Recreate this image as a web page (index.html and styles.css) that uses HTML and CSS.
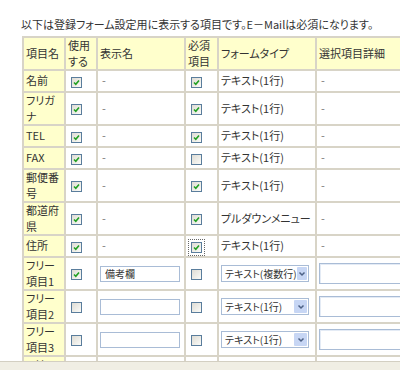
FILE: index.html
```html
<!DOCTYPE html>
<html lang="ja">
<head>
    <meta charset="UTF-8">
    <title>登録フォーム設定</title>
    <link rel="stylesheet" href="styles.css">
</head>
<body>
<div class="page">
    <div class="content">
        <p class="intro">以下は登録フォーム設定用に表示する項目です。E－Mailは必須になります。</p>

        <!-- 項目一覧 -->
        <table class="items">
            <colgroup>
                <col class="c-name">
                <col class="c-use">
                <col class="c-label">
                <col class="c-req">
                <col class="c-type">
                <col class="c-detail">
            </colgroup>
            <tr>
                <th>項目名</th>
                <th>使用<br>する</th>
                <th>表示名</th>
                <th>必須<br>項目</th>
                <th>フォームタイプ</th>
                <th>選択項目詳細</th>
            </tr>
            <tr class="one">
                <td class="name">名前</td>
                <td><span class="cb on"><svg viewBox="0 0 9 9"><path d="M2 4.5L3.8 6.3L7 2.6"/></svg></span></td>
                <td class="dash">-</td>
                <td><span class="cb on"><svg viewBox="0 0 9 9"><path d="M2 4.5L3.8 6.3L7 2.6"/></svg></span></td>
                <td class="type">テキスト(1行)</td>
                <td class="dash">-</td>
            </tr>
            <tr>
                <td class="name">フリガ<br>ナ</td>
                <td><span class="cb on"><svg viewBox="0 0 9 9"><path d="M2 4.5L3.8 6.3L7 2.6"/></svg></span></td>
                <td class="dash">-</td>
                <td><span class="cb on"><svg viewBox="0 0 9 9"><path d="M2 4.5L3.8 6.3L7 2.6"/></svg></span></td>
                <td class="type">テキスト(1行)</td>
                <td class="dash">-</td>
            </tr>
            <tr class="one">
                <td class="name">TEL</td>
                <td><span class="cb on"><svg viewBox="0 0 9 9"><path d="M2 4.5L3.8 6.3L7 2.6"/></svg></span></td>
                <td class="dash">-</td>
                <td><span class="cb on"><svg viewBox="0 0 9 9"><path d="M2 4.5L3.8 6.3L7 2.6"/></svg></span></td>
                <td class="type">テキスト(1行)</td>
                <td class="dash">-</td>
            </tr>
            <tr class="one">
                <td class="name">FAX</td>
                <td><span class="cb on"><svg viewBox="0 0 9 9"><path d="M2 4.5L3.8 6.3L7 2.6"/></svg></span></td>
                <td class="dash">-</td>
                <td><span class="cb"></span></td>
                <td class="type">テキスト(1行)</td>
                <td class="dash">-</td>
            </tr>
            <tr>
                <td class="name">郵便番<br>号</td>
                <td><span class="cb on"><svg viewBox="0 0 9 9"><path d="M2 4.5L3.8 6.3L7 2.6"/></svg></span></td>
                <td class="dash">-</td>
                <td><span class="cb on"><svg viewBox="0 0 9 9"><path d="M2 4.5L3.8 6.3L7 2.6"/></svg></span></td>
                <td class="type">テキスト(1行)</td>
                <td class="dash">-</td>
            </tr>
            <tr>
                <td class="name">都道府<br>県</td>
                <td><span class="cb on"><svg viewBox="0 0 9 9"><path d="M2 4.5L3.8 6.3L7 2.6"/></svg></span></td>
                <td class="dash">-</td>
                <td><span class="cb on"><svg viewBox="0 0 9 9"><path d="M2 4.5L3.8 6.3L7 2.6"/></svg></span></td>
                <td class="type">プルダウンメニュー</td>
                <td class="dash">-</td>
            </tr>
            <tr class="one">
                <td class="name">住所</td>
                <td><span class="cb on"><svg viewBox="0 0 9 9"><path d="M2 4.5L3.8 6.3L7 2.6"/></svg></span></td>
                <td class="dash">-</td>
                <td><span class="cb on focus"><svg viewBox="0 0 9 9"><path d="M2 4.5L3.8 6.3L7 2.6"/></svg></span></td>
                <td class="type">テキスト(1行)</td>
                <td class="dash">-</td>
            </tr>
            <tr>
                <td class="name">フリー<br>項目1</td>
                <td><span class="cb on"><svg viewBox="0 0 9 9"><path d="M2 4.5L3.8 6.3L7 2.6"/></svg></span></td>
                <td><input class="field" type="text" value="備考欄"></td>
                <td><span class="cb"></span></td>
                <td>
                    <span class="select">テキスト(複数行)<span class="select-btn"><svg viewBox="0 0 8 6"><path d="M1.5 1.5L4 4L6.5 1.5"/></svg></span></span>
                </td>
                <td><span class="area"></span></td>
            </tr>
            <tr>
                <td class="name">フリー<br>項目2</td>
                <td><span class="cb"></span></td>
                <td><input class="field" type="text" value=""></td>
                <td><span class="cb"></span></td>
                <td>
                    <span class="select">テキスト(1行)<span class="select-btn"><svg viewBox="0 0 8 6"><path d="M1.5 1.5L4 4L6.5 1.5"/></svg></span></span>
                </td>
                <td><span class="area"></span></td>
            </tr>
            <tr>
                <td class="name">フリー<br>項目3</td>
                <td><span class="cb"></span></td>
                <td><input class="field" type="text" value=""></td>
                <td><span class="cb"></span></td>
                <td>
                    <span class="select">テキスト(1行)<span class="select-btn"><svg viewBox="0 0 8 6"><path d="M1.5 1.5L4 4L6.5 1.5"/></svg></span></span>
                </td>
                <td><span class="area"></span></td>
            </tr>
            <tr>
                <td class="name">フリー<br>項目4</td>
                <td><span class="cb"></span></td>
                <td><input class="field" type="text" value=""></td>
                <td><span class="cb"></span></td>
                <td>
                    <span class="select">テキスト(1行)<span class="select-btn"><svg viewBox="0 0 8 6"><path d="M1.5 1.5L4 4L6.5 1.5"/></svg></span></span>
                </td>
                <td><span class="area"></span></td>
            </tr>
        </table>
    </div>
    <div class="statusbar"></div>
</div>
</body>
</html>
```

FILE: styles.css
```css
body {
    margin: 0;
    background-color: #fff;
    color: #333;
    font-family: "Noto Sans CJK JP", "Liberation Sans", sans-serif;
    font-size: 11px;
    font-feature-settings: "palt";
}

.page {
    height: 370px;
    display: flex;
    flex-direction: column;
}

.content {
    flex: 1;
    overflow: hidden;
    padding-left: 21px;
}

.intro {
    margin: 16px 0 4px;
    line-height: 16px;
    white-space: nowrap;
}

.statusbar {
    height: 8px;
    background-color: #f0eee4;
    border-top: 1px solid #d3cfc2;
}

/* table */
.items {
    margin-left: 1px;
    border-collapse: collapse;
    table-layout: fixed;
    width: 440px;
}

.c-name { width: 42px; }
.c-use { width: 32px; }
.c-label { width: 88px; }
.c-req { width: 33px; }
.c-type { width: 98px; }
.c-detail { width: 147px; }

.items th,
.items td {
    border: 2px solid #d8d4c7;
    padding: 0 2px;
    line-height: 15.5px;
    text-align: left;
    vertical-align: middle;
    font-weight: normal;
    white-space: nowrap;
}

.items th,
.items td.name {
    background-color: #ffffcc;
}

.items tr.one td {
    height: 20px;
}

.dash {
    color: #777;
    padding-left: 4px !important;
}

/* checkbox */
.cb {
    display: inline-block;
    width: 9px;
    height: 9px;
    margin-left: 3px;
    border: 1px solid #5a7d9c;
    background: linear-gradient(135deg, #dedcd4, #fbfbf8);
    vertical-align: middle;
}

.cb svg {
    display: block;
    width: 9px;
    height: 9px;
    fill: none;
    stroke: #22a022;
    stroke-width: 1.6;
}

.cb.focus {
    outline: 1px dotted #666;
    outline-offset: 2px;
}

/* form controls */
.field {
    display: block;
    box-sizing: border-box;
    width: 80px;
    height: 16px;
    margin: 0;
    padding: 0 4px;
    border: 1px solid #a9bcd6;
    font-family: inherit;
    font-size: 10px;
    color: #333;
}

.select {
    display: flex;
    align-items: center;
    box-sizing: border-box;
    width: 88px;
    height: 17px;
    padding-left: 3px;
    border: 1px solid #a9bcd6;
    font-size: 10px;
    line-height: 13px;
}

.select-btn {
    margin-left: auto;
    width: 13px;
    height: 13px;
    margin-right: 1px;
    background-color: #c7d6f4;
    border-radius: 1px;
    display: flex;
    align-items: center;
    justify-content: center;
}

.select-btn svg {
    width: 8px;
    height: 6px;
    fill: none;
    stroke: #4d6185;
    stroke-width: 1.5;
}

.area {
    display: block;
    box-sizing: border-box;
    width: 150px;
    height: 21px;
    border: 1px solid #a9bcd6;
    box-shadow: inset 1px 1px 0 #e4ebf5;
}
```
